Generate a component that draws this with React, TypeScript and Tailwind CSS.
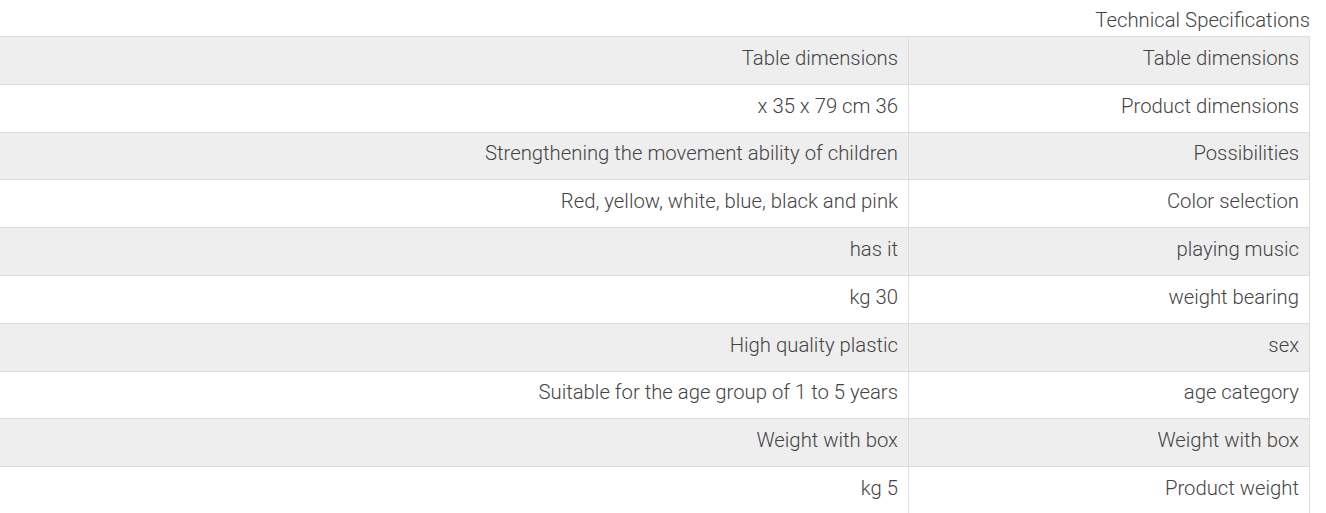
const rows: [string, string][] = [
  ["Table dimensions", "Table dimensions"],
  ["x 35 x 79 cm 36", "Product dimensions"],
  ["Strengthening the movement ability of children", "Possibilities"],
  ["Red, yellow, white, blue, black and pink", "Color selection"],
  ["has it", "playing music"],
  ["kg 30", "weight bearing"],
  ["High quality plastic", "sex"],
  ["Suitable for the age group of 1 to 5 years", "age category"],
  ["Weight with box", "Weight with box"],
  ["kg 5", "Product weight"],
];

const App = () => {
  return (
    <div className="min-h-screen bg-white font-['Roboto',sans-serif] font-light text-[#444]">
      <div className="w-[1310px]">
        {/* Title */}
        <h2 className="h-[36px] pt-[7px] text-right text-[20.3px] font-light leading-[26px]">
          Technical Specifications
        </h2>

        {/* Specs table */}
        <table className="w-full border-collapse">
          <tbody>
            {rows.map(([value, label], i) => (
              <tr key={i} className={i % 2 === 0 ? "bg-[#eeeeee]" : "bg-white"}>
                <td className="h-[47.8px] border border-l-0 border-[#dddddd] px-[10px] pb-[5px] text-right text-[20.3px] leading-[26px]">
                  {value}
                </td>
                <td className="h-[47.8px] w-[401px] border border-[#dddddd] px-[10px] pb-[5px] text-right text-[20.3px] leading-[26px]">
                  {label}
                </td>
              </tr>
            ))}
          </tbody>
        </table>
      </div>
    </div>
  );
};

export default App;
